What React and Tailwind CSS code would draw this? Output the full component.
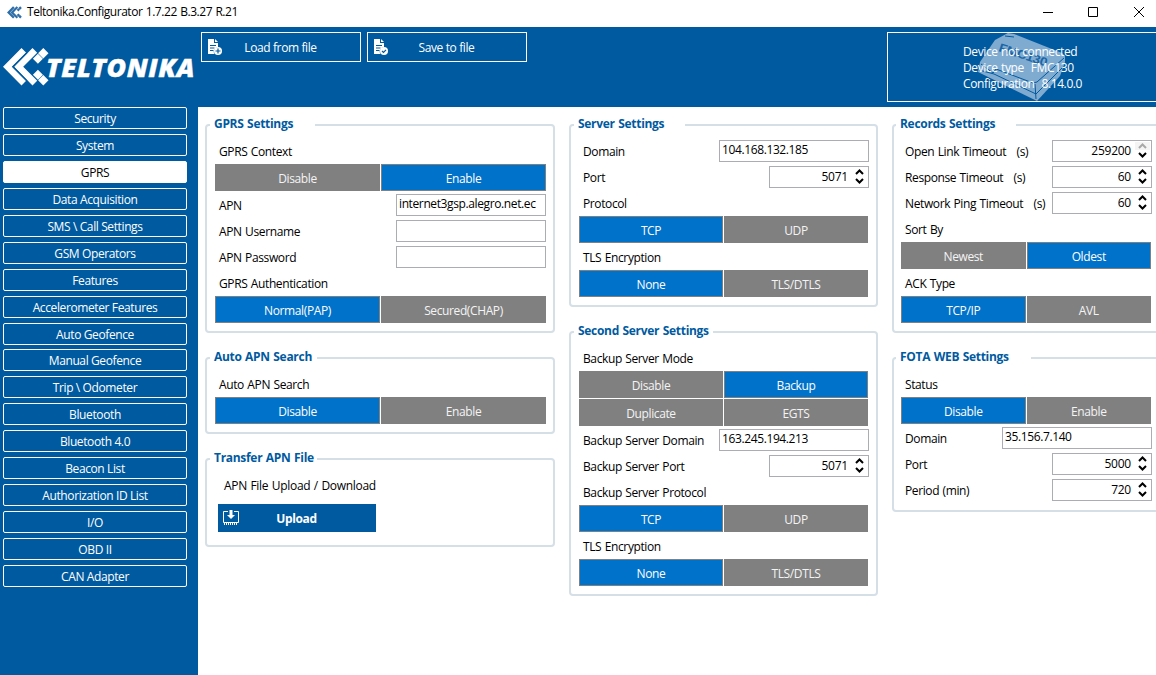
import React from 'react';

const menu = [
  'Security',
  'System',
  'GPRS',
  'Data Acquisition',
  'SMS \\ Call Settings',
  'GSM Operators',
  'Features',
  'Accelerometer Features',
  'Auto Geofence',
  'Manual Geofence',
  'Trip \\ Odometer',
  'Bluetooth',
  'Bluetooth 4.0',
  'Beacon List',
  'Authorization ID List',
  'I/O',
  'OBD II',
  'CAN Adapter',
];

function Chevrons({ className }) {
  return (
    <svg className={className} viewBox="0 0 46 38" fill="currentColor">
      <path d="M18.500 0l4.700 4.700L9.200 18.700l14 14-4.700 4.700L0 18.700z" />
      <path d="M29.500 0l4.700 4.700-14 14 14 14-4.700 4.700L11.200 18.700z" />
      <path d="M40.300 0l5.200 5.200-5.200 5.200-5.200-5.200zM34.900 5.700l5 5-5 5-5-5zM40.300 27l5.200 5.200-5.200 5.200-5.200-5.200zM34.900 21.700l5 5-5 5-5-5z" />
      <path d="M24 4.500L9.800 18.700 24 32.900" fill="none" stroke="#005a9f" strokeWidth="1.400" />
    </svg>
  );
}

function Logo() {
  return (
    <svg className="w-[198px] h-[40px] text-white" viewBox="0 0 198 40">
      <svg x="3" y="1" width="46" height="38" viewBox="0 0 46 38">
        <Chevrons />
      </svg>
      <text
        x="46"
        y="29.500"
        textLength="149"
        lengthAdjust="spacingAndGlyphs"
        fill="white"
        stroke="white"
        strokeWidth=".4"
        className="font-['Open_Sans'] font-extrabold italic text-[25px] tracking-[0.02em]"
      >
        TELTONIKA
      </text>
    </svg>
  );
}

function FileIcon({ children }) {
  return (
    <svg className="w-[16px] h-[17px]" viewBox="0 0 16 17" fill="none">
      <path d="M1 0h6v4h4v4a4.500 4.500 0 0 0-3.500 7H1z" fill="white" />
      <path d="M8 0l3 3H8z" fill="white" />
      <path d="M3 6.500h6M3 9h4.500M3 11.500h3.500" stroke="#005a9f" />
      <circle cx="11" cy="12" r="4" fill="white" />
      {children}
    </svg>
  );
}

function FileButton({ label, children }) {
  return (
    <button className="flex items-center w-[160px] h-[30px] border border-white pl-[5px] text-white">
      <FileIcon>{children}</FileIcon>
      <span className="flex-1 pt-[2px] pr-[22px] text-center">{label}</span>
    </button>
  );
}

function DeviceImage() {
  return (
    <svg className="absolute left-[90px] top-0 w-[90px] h-[70px]" viewBox="0 0 90 70">
      <path d="M30 0l6 1 48 19 3 3v6l-5 14-23 25L0 39l2-10L17 7z" fill="#80abd1" />
      <g fill="none" stroke="#005a9f" strokeWidth="1">
        <path d="M27 3l9 1M3 31l12 9 3-4 37 14 4-1L86 25M57 51l1 15M1 37l15 4 42 20L84 35" />
      </g>
      <text
        transform="translate(20 18) rotate(18)"
        textLength="50"
        lengthAdjust="spacingAndGlyphs"
        fill="#1a65a5"
        className="font-['Liberation_Sans'] font-bold text-[12px]"
      >
        FMC130
      </text>
    </svg>
  );
}

function Group({ title, legend, className, children }) {
  return (
    <section className={`border-2 border-[#d5dfe6] rounded-[4px] ${className}`}>
      <h2 className={`-mt-[10px] mb-[6px] -ml-[5px] h-4 leading-4 pl-1 font-bold tracking-[-0.025em] text-[#005a9f] bg-white whitespace-nowrap ${legend}`}>
        {title}
      </h2>
      {children}
    </section>
  );
}

function Label({ children }) {
  return <div className="h-[26px] leading-[27px] pl-1 whitespace-pre">{children}</div>;
}

function Toggle({ options, active }) {
  return (
    <div className="grid grid-cols-2 gap-px pb-px text-[#f4f4f4]">
      {options.map((option) => (
        <button
          key={option}
          className={`h-[27px] pt-[2px] leading-[23px] border border-[#808080] ${option === active ? 'bg-[#0072c9] text-white' : 'bg-[#808080]'}`}
        >
          {option}
        </button>
      ))}
    </div>
  );
}

function Field({ label, className = '-mr-px', children }) {
  return (
    <div className={`flex justify-between items-start h-[26px] ${className}`}>
      <Label>{label}</Label>
      {children}
    </div>
  );
}

function TextBox({ value }) {
  return (
    <div className="mt-[2px] w-[150px] h-[22px] border border-[#abadb3] bg-white pl-[2px] leading-[18px] whitespace-nowrap">
      {value}
    </div>
  );
}

function NumberBox({ value, atMax }) {
  return (
    <div className="mt-[2px] flex items-center justify-end w-[100px] h-[22px] border border-[#abadb3] bg-white pr-px">
      <span className="leading-5 mr-[4px] tracking-[-0.02em]">{value}</span>
      <svg className="w-[15px] h-[18px]" viewBox="0 0 15 18" fill="none" strokeWidth="2">
        {atMax && <path d="M0 0h15v8H0z" fill="#f4f4f4" />}
        <path d="M4 6l3.500-3.500L11 6" stroke={atMax ? '#a8a8a8' : '#000'} />
        <path d="M4 11l3.500 3.500L11 11" stroke="#000" />
      </svg>
    </div>
  );
}

function TitleBar() {
  return (
    <div className="flex items-center h-[27px] bg-white pl-[7px] pb-[3px]">
      <Chevrons className="w-[15px] h-[13px] text-[#2f6ea8]" />
      <span className="ml-[5px] tracking-[-0.038em]">Teltonika.Configurator 1.7.22 B.3.27 R.21</span>
      <svg className="ml-auto mr-[11px] w-[103px] h-[12px]" viewBox="0 0 103 12" fill="none" stroke="black">
        <path d="M1 6.500h10M46.500 1.500h9v9h-9zM92 1l10 10M102 1l-10 10" />
      </svg>
    </div>
  );
}

function Header() {
  return (
    <header className="flex h-[80px] bg-[#005a9f]">
      <div className="w-[201px] pt-[20px]">
        <Logo />
      </div>
      <div className="flex gap-[6px] pt-[5px]">
        <FileButton label="Load from file">
          <path d="M11 9.500v5M8.500 12h5" stroke="#005a9f" strokeWidth="1.200" />
        </FileButton>
        <FileButton label="Save to file">
          <path d="M9 12l1.500 1.500 2.500-2.700" stroke="#005a9f" strokeWidth="1.200" />
        </FileButton>
      </div>
      <div className="relative ml-auto mt-[5px] w-[269px] h-[70px] border border-r-0 border-white text-white">
        <DeviceImage />
        <div className="relative pt-[11px] pl-[75px] leading-4 whitespace-pre">
          <p>Device not connected</p>
          <p>{'Device type  FMC130'}</p>
          <p>{'Configuration  8.14.0.0'}</p>
        </div>
      </div>
    </header>
  );
}

function Sidebar() {
  return (
    <nav className="flex flex-col gap-[4.94px] w-[198px] shrink-0 pl-[3px] bg-[#005a9f] text-white">
      {menu.map((item) => (
        <button
          key={item}
          className={`w-[184px] h-[22px] shrink-0 border border-white rounded-[2px] pt-px leading-5 ${item === 'GPRS' ? 'bg-white text-black' : ''}`}
        >
          {item}
        </button>
      ))}
    </nav>
  );
}

function App() {
  return (
    <div className="w-[1156px] h-[675px] flex flex-col overflow-hidden bg-white text-black text-[12px] tracking-[-0.032em] [word-spacing:0.7px] font-['Open_Sans','Noto_Sans',sans-serif]">
      <TitleBar />
      <Header />
      <div className="flex flex-1 min-h-0">
        <Sidebar />
        <main className="flex items-start min-w-0 pl-[7px] pt-[17px]">
          <div className="flex flex-col gap-[24px] w-[350px] shrink-0">
            <Group title="GPRS Settings" legend="w-[105px]" className="h-[209px] pl-[8px] pr-[7px]">
              <Label>GPRS Context</Label>
              <Toggle options={['Disable', 'Enable']} active="Enable" />
              <Field label="APN" className="mr-0">
                <TextBox value="internet3gsp.alegro.net.ec" />
              </Field>
              <Field label="APN Username" className="mr-0">
                <TextBox />
              </Field>
              <Field label="APN Password" className="mr-0">
                <TextBox />
              </Field>
              <Label>GPRS Authentication</Label>
              <Toggle options={['Normal(PAP)', 'Secured(CHAP)']} active="Normal(PAP)" />
            </Group>
            <Group title="Auto APN Search" legend="w-[107px]" className="h-[77px] pl-[8px] pr-[7px]">
              <Label>Auto APN Search</Label>
              <Toggle options={['Disable', 'Enable']} active="Disable" />
            </Group>
            <Group title="Transfer APN File" legend="w-[107px]" className="h-[89px] px-[8px]">
              <div className="h-[32px] leading-[28px] pl-[9px] tracking-[-0.025em]">APN File Upload / Download</div>
              <button className="flex items-center ml-[3px] w-[158px] h-[28px] bg-[#005a9f] pl-[5px] text-white">
                <svg className="w-[16px] h-[16px]" viewBox="0 0 16 16" fill="none" stroke="white">
                  <path d="M5 1.500H.5v11h15v-11H11" />
                  <path d="M8 0v5" strokeWidth="3" />
                  <path d="M4 5h8L8 9z" fill="white" stroke="none" />
                  <path d="M1.500 13v2M3.500 13v2M5.500 13v2M7.500 13v2M9.500 13v2M11.500 13v2M13.500 13v2" />
                </svg>
                <span className="flex-1 pt-[2px] pr-[22px] text-center font-bold">Upload</span>
              </button>
            </Group>
          </div>

          <div className="flex flex-col gap-[24px] w-[309px] shrink-0 ml-[14px]">
            <Group title="Server Settings" legend="w-[111px]" className="h-[183px] px-[8px]">
              <Field label="Domain">
                <TextBox value="104.168.132.185" />
              </Field>
              <Field label="Port">
                <NumberBox value="5071" />
              </Field>
              <Label>Protocol</Label>
              <Toggle options={['TCP', 'UDP']} active="TCP" />
              <Label>TLS Encryption</Label>
              <Toggle options={['None', 'TLS/DTLS']} active="None" />
            </Group>
            <Group title="Second Server Settings" legend="w-[139px]" className="h-[265px] px-[8px]">
              <Label>Backup Server Mode</Label>
              <Toggle options={['Disable', 'Backup']} active="Backup" />
              <Toggle options={['Duplicate', 'EGTS']} />
              <Field label="Backup Server Domain">
                <TextBox value="163.245.194.213" />
              </Field>
              <Field label="Backup Server Port">
                <NumberBox value="5071" />
              </Field>
              <Label>Backup Server Protocol</Label>
              <Toggle options={['TCP', 'UDP']} active="TCP" />
              <Label>TLS Encryption</Label>
              <Toggle options={['None', 'TLS/DTLS']} active="None" />
            </Group>
          </div>

          <div className="flex flex-col gap-[24px] w-[270px] shrink-0 ml-[14px]">
            <Group title="Records Settings" legend="w-[120px]" className="h-[209px] pl-[7px] pr-[9px]">
              <Field label="Open Link Timeout   (s)">
                <NumberBox value="259200" atMax />
              </Field>
              <Field label="Response Timeout   (s)">
                <NumberBox value="60" />
              </Field>
              <Field label="Network Ping Timeout   (s)">
                <NumberBox value="60" />
              </Field>
              <Label>Sort By</Label>
              <Toggle options={['Newest', 'Oldest']} active="Oldest" />
              <Label>ACK Type</Label>
              <Toggle options={['TCP/IP', 'AVL']} active="TCP/IP" />
            </Group>
            <Group title="FOTA WEB Settings" legend="w-[135px]" className="h-[155px] pl-[7px] pr-[9px]">
              <Label>Status</Label>
              <Toggle options={['Disable', 'Enable']} active="Disable" />
              <Field label="Domain">
                <TextBox value="35.156.7.140" />
              </Field>
              <Field label="Port">
                <NumberBox value="5000" />
              </Field>
              <Field label="Period (min)">
                <NumberBox value="720" />
              </Field>
            </Group>
          </div>
        </main>
      </div>
    </div>
  );
}

export default App;
